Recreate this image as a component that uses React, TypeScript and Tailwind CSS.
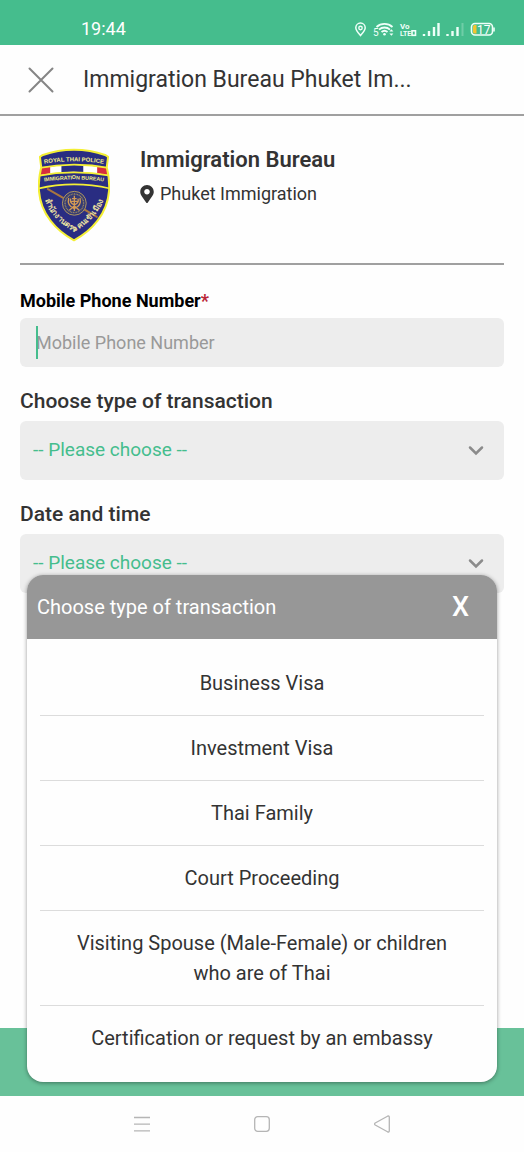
import { useState } from "react";
import { FaMapMarkerAlt } from "react-icons/fa";

const TRANSACTIONS = [
  "Business Visa",
  "Investment Visa",
  "Thai Family",
  "Court Proceeding",
  "Visiting Spouse (Male-Female) or children who are of Thai",
  "Certification or request by an embassy",
];

const SHIELD =
  "M40 45Q85 29 134 29Q183 29 228 45L237 51L233 82Q242 118 240 152C235 225 186 275 134 303C82 275 33 225 28 152Q26 118 35 82L31 51Z";

const StatusBar = () => (
  <div className="flex h-[45px] items-end justify-between bg-[#45bd8d] pr-[29px] pb-[6px] pl-[81px] text-white">
    <span className="text-[18px] leading-5">19:44</span>
    <svg width="142" height="20" viewBox="353 19 142 20" fill="none" stroke="#effff9">
      <path
        d="M360.500 35.500c-2.500-2.800-4.700-5-4.700-7.700a4.700 4.700 0 0 1 9.400 0c0 2.700-2.200 4.900-4.700 7.700z"
        strokeWidth="1.500"
      />
      <circle cx="360.500" cy="28" r="1.700" strokeWidth="1.400" />
      <text x="373" y="36" fontSize="10" fill="#effff9" stroke="none">5</text>
      <path d="M376.500 27a12 12 0 0 1 16 0M379 29.600a8.300 8.300 0 0 1 11 0M381.500 32a4.600 4.600 0 0 1 6 0" strokeWidth="1.800" />
      <circle cx="384.500" cy="34.200" r="1.300" fill="#effff9" stroke="none" />
      <path d="M389.400 31.500l2-2.300 2 2.300zM389.400 33.500l2 2.300 2-2.300z" fill="#effff9" stroke="none" />
      <text x="400" y="28.500" fontSize="8" fontWeight="700" fill="#effff9" stroke="none">Vo</text>
      <text x="400" y="36" fontSize="7" fontWeight="700" fill="#effff9" stroke="none">LTE</text>
      <rect x="412" y="30.800" width="3.500" height="4.500" strokeWidth="1.600" />
      <path d="M424 36v-2M429 36v-5M434 36v-9M438.500 36v-13M447.500 36v-2M452.500 36v-5M457.500 36v-9" strokeWidth="2.400" />
      <path d="M462.500 36v-13" strokeWidth="2" opacity=".25" />
      <rect x="471.500" y="23.500" width="21" height="11.500" rx="3.500" strokeWidth="1.600" />
      <path d="M494 27.500v4" strokeWidth="1.600" />
      <path d="M476.500 25h-2q-1.500 0-1.500 1.500v5.500q0 1.500 1.500 1.500h2z" fill="#f2c431" stroke="none" />
      <text x="477" y="33.500" fontSize="12" fill="#fff" stroke="none">17</text>
    </svg>
  </div>
);

const PoliceBadge = () => (
  <svg className="shrink-0" width="72" height="94" viewBox="26 24 216 284" role="img" aria-label="Royal Thai Police Immigration Bureau">
    <defs>
      <path id="arc-top" d="M22 76Q134 52 246 76" />
      <path id="arc-mid" d="M20 129Q134 109 248 129" />
      <path id="arc-thai" d="M46 182C62 226 94 254 134 278C174 254 206 226 222 182" />
      <clipPath id="shield">
        <path d={SHIELD} />
      </clipPath>
    </defs>
    <g clipPath="url(#shield)">
      <rect x="20" y="20" width="230" height="290" fill="#292d82" />
      <path d="M20 86Q134 66 250 86V108Q134 86 20 108Z" fill="#fff" />
      <path d="M20 86Q40 81 62 78V101Q40 103 20 108ZM204 78Q226 81 250 86V108Q226 103 204 100Z" fill="#d72e3e" />
      <path d="M96 76Q134 74 162 76V97Q134 95 96 97Z" fill="#292d82" />
      <path d="M20 86Q134 62 250 86M20 109Q134 86 250 109M20 148Q134 120 250 148" fill="none" stroke="#f4ef35" strokeWidth="5" />
    </g>
    <path d={SHIELD} fill="none" stroke="#f4ef35" strokeWidth="6" strokeLinejoin="round" />
    <g fontFamily="Liberation Sans, sans-serif" fontWeight="700" fill="#f5f08a" textAnchor="middle">
      <text fontSize="18">
        <textPath href="#arc-top" startOffset="50%">ROYAL THAI POLICE</textPath>
      </text>
      <text fontSize="16">
        <textPath href="#arc-mid" startOffset="50%">IMMIGRATION BUREAU</textPath>
      </text>
    </g>
    <path d="M55 148L104 176M166 210L203 232" stroke="#a9763f" strokeWidth="6" strokeLinecap="round" />
    <circle cx="135" cy="191" r="36" fill="#343a74" stroke="#ae9660" strokeWidth="3" />
    <circle cx="135" cy="191" r="28" fill="none" stroke="#9c8962" strokeWidth="4" strokeDasharray="3 2" />
    <path
      d="M135 168V214M118 175Q112 198 135 207Q158 198 152 175M124 177Q120 190 135 196Q150 190 146 177M120 212L135 199L150 212M128 177H142M126 185H144"
      fill="none"
      stroke="#d39a55"
      strokeWidth="4"
    />
    <text fontSize="24" fontWeight="700" fill="#e6dfa0" textAnchor="middle">
      <textPath href="#arc-thai" startOffset="50%">สำนักงานตรวจคนเข้าเมือง</textPath>
    </text>
  </svg>
);

const Chevron = () => (
  <svg className="pointer-events-none col-start-1 row-start-1 mr-5 self-center justify-self-end" width="16" height="12" viewBox="0 0 16 12" fill="none">
    <path d="M2 2.500L8 8.500L14 2.500" stroke="#8b8b8b" strokeWidth="2.500" strokeLinecap="round" />
  </svg>
);

const SelectField = ({ id, label, options }: { id: string; label: string; options: string[] }) => (
  <div className="mt-[22px]">
    <label htmlFor={id} className="block text-[21px] leading-6 font-medium">
      {label}
    </label>
    <div className="mt-2 grid items-center">
      <select
        id={id}
        className="col-start-1 row-start-1 h-[59px] w-full appearance-none rounded-md bg-[#ededed] px-[13px] text-[19px] text-[#45bd8d] outline-none"
      >
        <option>-- Please choose --</option>
        {options.map((option) => (
          <option key={option}>{option}</option>
        ))}
      </select>
      <Chevron />
    </div>
  </div>
);

export default function App() {
  const [open, setOpen] = useState(true);

  return (
    <div className="flex min-h-screen flex-col bg-[#fefefe] font-['Roboto',sans-serif] text-[#333]">
      <StatusBar />
      <div className="relative flex flex-1 flex-col">
        <header className="flex h-[71px] items-center border-b-2 border-[#a0a0a0] px-7">
          <button type="button" aria-label="Close">
            <svg width="26" height="26" viewBox="0 0 26 26" stroke="#858585" strokeWidth="2" strokeLinecap="round">
              <path d="M1.500 1.500L24.500 24.500M24.500 1.500L1.500 24.500" />
            </svg>
          </button>
          <h1 className="ml-[29px] truncate text-[23px] leading-8">Immigration Bureau Phuket Im...</h1>
        </header>

        <main className="flex-1 px-5">
          <section className="flex border-b-2 border-[#a0a0a0] px-[18px] pt-8 pb-[21px]">
            <PoliceBadge />
            <div className="ml-[30px]">
              <h2 className="text-[22px] leading-6 font-semibold">Immigration Bureau</h2>
              <p className="mt-3 flex items-center gap-[6px] text-[18px] leading-5">
                <FaMapMarkerAlt size={18} className="w-[14px]" />
                Phuket Immigration
              </p>
            </div>
          </section>

          <form>
            <div className="mt-6">
              <label htmlFor="phone" className="block text-[18px] leading-6 font-bold text-black">
                Mobile Phone Number<span className="text-[#bb2637]">*</span>
              </label>
              <div className="relative mt-[5px]">
                <input
                  id="phone"
                  type="tel"
                  placeholder="Mobile Phone Number"
                  className="block h-[49px] w-full rounded-md bg-[#ededed] px-4 text-[18px] outline-none placeholder:text-[#999]"
                />
                <span className="absolute inset-y-2 left-4 w-[2px] bg-[#45bd8d]" />
              </div>
            </div>
            <SelectField id="transaction" label="Choose type of transaction" options={TRANSACTIONS} />
            <SelectField id="date" label="Date and time" options={[]} />
          </form>
        </main>

        <footer className="h-[68px] bg-[#68c199]" />

        {open && (
          <div
            role="dialog"
            aria-labelledby="sheet-title"
            className="absolute inset-x-[27px] bottom-[14px] overflow-hidden rounded-2xl bg-[#fefefe] shadow-[0_1px_4px_rgba(0,0,0,0.4)]"
          >
            <div className="flex h-16 items-center justify-between bg-[#979797] pr-7 pl-[10px] text-white">
              <h2 id="sheet-title" className="text-[20px] leading-6">
                Choose type of transaction
              </h2>
              <button type="button" aria-label="Close list" onClick={() => setOpen(false)} className="text-[27px] leading-8 font-medium">
                X
              </button>
            </div>
            <ul className="divide-y divide-[#dcdcdc] px-[13px] py-3 text-[20px] leading-[30px]">
              {TRANSACTIONS.map((item) => (
                <li key={item}>
                  <button type="button" onClick={() => setOpen(false)} className="w-full px-7 py-[17px] text-center">
                    {item}
                  </button>
                </li>
              ))}
            </ul>
          </div>
        )}
      </div>

      <nav className="flex h-14 items-center justify-center gap-[104px] bg-[#fefefe]">
        <button type="button" aria-label="Recent apps">
          <svg width="16" height="16" viewBox="0 0 16 16" stroke="#b5b5b5" strokeWidth="1.300">
            <path d="M0 1.500H16M0 8.200H16M0 14.800H16" />
          </svg>
        </button>
        <button type="button" aria-label="Home">
          <svg width="16" height="16" viewBox="0 0 16 16" fill="none" stroke="#b5b5b5" strokeWidth="1.300">
            <rect x="0.700" y="0.700" width="14.600" height="14.600" rx="3" />
          </svg>
        </button>
        <button type="button" aria-label="Back">
          <svg width="16" height="18" viewBox="0 0 16 18" fill="none" stroke="#b5b5b5" strokeWidth="1.300" strokeLinejoin="round">
            <path d="M1.200 8L13.500 1.200Q15.300 .5 15.300 2.300V15.700Q15.300 17.500 13.500 16.800L1.200 10Q0 9 1.200 8Z" />
          </svg>
        </button>
      </nav>
    </div>
  );
}
